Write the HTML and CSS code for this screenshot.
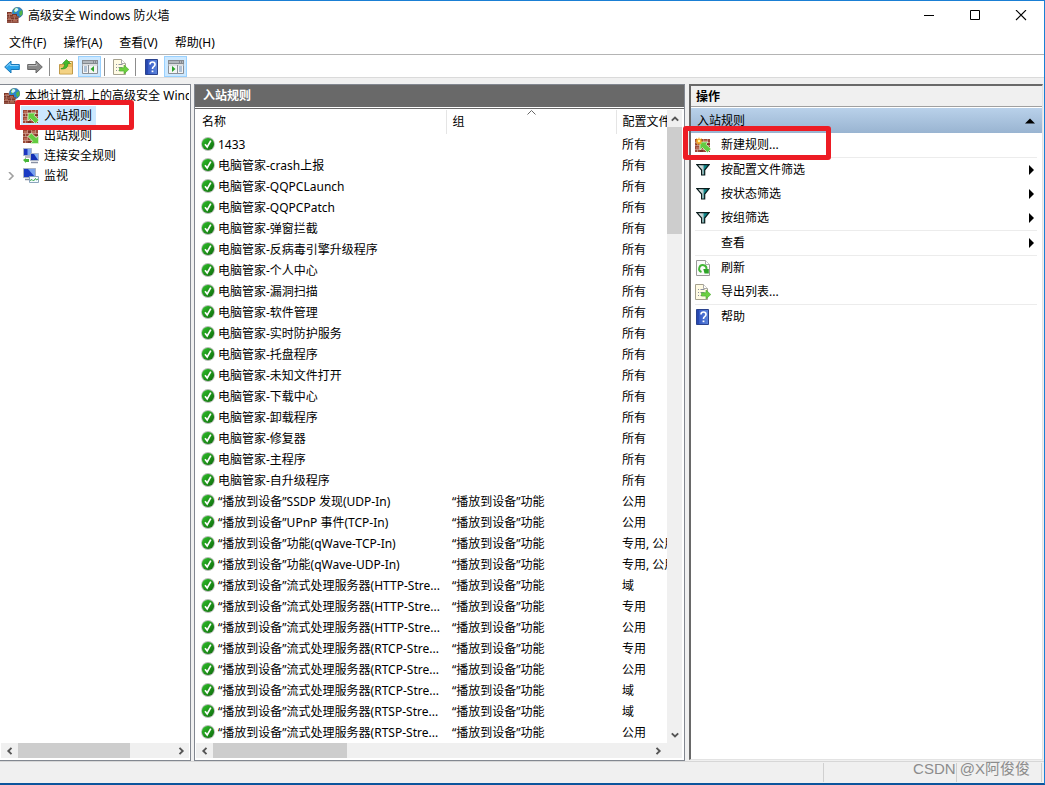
FILE: index.html
```html
<!DOCTYPE html>
<html lang="zh-CN">
<head>
<meta charset="utf-8">
<title>高级安全 Windows 防火墙</title>
<link rel="stylesheet" href="styles.css">
</head>
<body>
<svg class="sprite" aria-hidden="true">
  <defs>
    <linearGradient id="gGreen" x1="0" y1="0" x2="1" y2="1"><stop offset="0" stop-color="#2fc02a"/><stop offset="1" stop-color="#0e6a0c"/></linearGradient>
    <linearGradient id="gBlue" x1="0" y1="0" x2="1" y2="0"><stop offset="0" stop-color="#2c4fc0"/><stop offset="1" stop-color="#5d86dc"/></linearGradient>
    <linearGradient id="gTeal" x1="0" y1="0" x2="1" y2="0"><stop offset="0" stop-color="#ffffff"/><stop offset=".5" stop-color="#b8cccc"/><stop offset=".6" stop-color="#108a8c"/><stop offset="1" stop-color="#007c80"/></linearGradient>
    <symbol id="ok" viewBox="0 0 14 14">
      <circle cx="7" cy="7" r="6.900" fill="#b4bdb4"/><circle cx="7" cy="7" r="6.100" fill="url(#gGreen)"/>
      <path d="M4 7.200L6.200 10 9.800 3.600" fill="none" stroke="#fff" stroke-width="1.700"/>
    </symbol>
    <symbol id="bricks" viewBox="0 0 16 16">
      <path d="M0 2h15v13H0z" fill="#9c4a38"/>
      <path d="M1 3h3v2H1zM9 3h3v2H9zM5 6.500h3v2H5zM1 10h3v2H1zM9 10h3v2H9z" fill="#b86a55"/>
      <path d="M5 3h3v2H5zM1 6.500h1.500v2H1zM12 6.500h3v2h-3zM5 13h3v2H5z" fill="#7a3528"/>
      <path d="M0 5.500h15M0 8.500h15M0 12.500h15M4.500 2v3.500M8.500 2v3.500M12.500 2v3.500M2.500 5.500v3M6.500 5.500v3M4.500 8.500v4M8.500 8.500v4M2.500 12.500V15" stroke="#dcb4a6" stroke-width=".6"/>
    </symbol>
    <symbol id="firewall" viewBox="0 0 16 16">
      <circle cx="10.500" cy="5.500" r="5.300" fill="#2b86c9" stroke="#24547c" stroke-width=".5"/>
      <path d="M7 2q3-2 4-1l-1 3-3 2zM12 5l3-2q1 3 0 5l-2 1z" fill="#52b548"/><path d="M8.500 1.200q2.500-.6 3 1.800l-2.500 2-2-1z" fill="#d4f2f8"/>
      <path d="M0 5h5v2h5v2h1.500v7H0z" fill="#7c372a"/>
      <path d="M1 6h3v1.500H1zM6 8h3v1.500H6zM1 11h3v1.500H1zM6 13h4v1.500H6z" fill="#b26650"/>
      <path d="M0 7.500h5M0 10h11M0 12.500h11M0 15h11M4.500 5v3M2.500 7.500v3M7.500 10v3M4.500 12.500v3" stroke="#c9988a" stroke-width=".5"/>
    </symbol>
    <symbol id="inbound" viewBox="0 0 16 16"><use href="#bricks"/><path d="M5 5h8l-2 2.200 5 4.800-3.500 3.500-5-4.900L5 13z" fill="#62cc40" stroke="#dcf5d0" stroke-width=".8"/></symbol>
    <symbol id="outbound" viewBox="0 0 16 16"><use href="#bricks"/><path d="M15.500 15.500h-8l2.200-2.200L5 8.600 8.300 5l4.900 4.800 2.300-2.100z" fill="#62cc40" stroke="#dcf5d0" stroke-width=".8"/></symbol>
    <symbol id="newrule" viewBox="0 0 16 16"><use href="#inbound"/><path d="M4 0l.8 2.300L7 1l-1 2.300L8.500 4 6 5l1 2.200-2.300-1L4 8.500l-.8-2.300L1 7.200 2 5 0 4l2-.8L1 1l2.200 1.200z" fill="#f6a81c"/><circle cx="4" cy="4" r="1.300" fill="#fff2a0"/></symbol>
    <symbol id="link" viewBox="0 0 16 16">
      <path d="M.5.500h8v7h-8z" fill="#1d36c0" stroke="#aab4c8"/><path d="M4.500 1v6L8 7V1z" fill="#7fa8f0"/><path d="M2 9h6" stroke="#778"/>
      <path d="M7.500 5.500h8v7h-8z" fill="#1430b4" stroke="#aab4c8"/><path d="M11 6h4v6z" fill="#86b0f4"/><path d="M8 14.500h7" stroke="#8890a4" stroke-width="1.500"/>
      <path d="M0 12l3-2v1h3v3H3v1z" fill="#48b638"/>
    </symbol>
    <symbol id="monitor" viewBox="0 0 16 16">
      <path d="M.5.500h12v9h-12z" fill="#1c3cc4" stroke="#a9b2c2"/><path d="M5 1h7v8z" fill="#78a2ee"/><path d="M2 11.500h8" stroke="#8890a0" stroke-width="1.500"/>
      <path d="M6.500 8.500h9v6h-9z" fill="#f4fbff" stroke="#8ba4bc"/><path d="M7 12.500l2-1 1.500 1.500 2-2.500 1 1.500 1.500-1" fill="none" stroke="#35a447"/>
    </symbol>
    <symbol id="back" viewBox="0 0 16 14"><path d="M.7 7L7 1v3.500h8.300v5H7V13z" fill="#2ba3ea" stroke="#1b78b8"/><path d="M2.500 6.800L6 3.500v2h8.500" fill="none" stroke="#8ed4fa"/></symbol>
    <symbol id="forward" viewBox="0 0 16 14"><path d="M15.300 7L9 1v3.500H.7v5H9V13z" fill="#8a8a8a" stroke="#666"/><path d="M1.500 5.500h8.300V3.600" fill="none" stroke="#bbb"/></symbol>
    <symbol id="folder" viewBox="0 0 16 16"><path d="M1.500 15V5.500H7l1-3h6.500V15z" fill="#e9bd5c" stroke="#c09a48"/><path d="M9 3.500h4.500" stroke="#fff5cf"/><path d="M2 8h12v6.500H2z" fill="#f3d284"/><path d="M3 9.500q4-.500 3.500-5H4.500L8.500.500l4 4h-2.500q0 6-7 5.500z" fill="#43ba2b" stroke="#258a18" stroke-width=".6"/></symbol>
    <symbol id="export" viewBox="0 0 16 16"><path d="M.5.500h8l4 4v11H.5z" fill="#fffbe3" stroke="#a5a18e"/><path d="M8.500.500v4h4" fill="#fff" stroke="#aaa"/><path d="M3 5.500h1M5.500 5.500h4M3 8.500h1M5.500 8.500h4M3 11.500h1M5.500 11.500h4" stroke="#8a8fa0"/><path d="M6.500 8.800h4.500V6l4.800 4.500-4.800 4.400v-2.800H6.500z" fill="#6cd040" stroke="#4aa82e" stroke-width=".6"/></symbol>
    <symbol id="help" viewBox="0 0 14 16"><path d="M.5.500h12v15H.5z" fill="url(#gBlue)" stroke="#2b438e"/><path d="M2 1v14" stroke="#1f3c9e"/><path d="M5 5.500Q5 3 7.500 3T10 5.500q0 1.300-1.300 2.100T7.500 10" fill="none" stroke="#fff" stroke-width="1.600"/><path d="M6.600 11.500h1.800v1.700H6.600z" fill="#fff"/></symbol>
    <symbol id="paneLeft" viewBox="0 0 16 14"><path d="M.5.500h15v13H.5z" fill="#f4f4f4" stroke="#8a8f96"/><path d="M0 0h16v4H0z" fill="#858a90"/><path d="M1 2h10M12 2h1M14 2h1" stroke="#dfe3e8"/><path d="M0 5h16" stroke="#c4c8cc"/><path d="M6.500 5v8.500" stroke="#8a8f96"/><path d="M2 7h3M2 9h3M2 11h3" stroke="#6b8fb8"/><path d="M12 6v6L8.500 9z" fill="#2ca32a"/></symbol>
    <symbol id="paneRight" viewBox="0 0 16 14"><path d="M.5.500h15v13H.5z" fill="#f4f4f4" stroke="#8a8f96"/><path d="M0 0h16v4H0z" fill="#858a90"/><path d="M1 2h10M12 2h1M14 2h1" stroke="#dfe3e8"/><path d="M0 5h16" stroke="#c4c8cc"/><path d="M9.500 5v8.500" stroke="#8a8f96"/><path d="M11 7h3M11 9h3M11 11h3" stroke="#6b8fb8"/><path d="M4 6v6l3.500-3z" fill="#2ca32a"/></symbol>
    <symbol id="funnel" viewBox="0 0 14 12"><path d="M.9.700h12.200L8.700 6v5H5.600V6z" fill="url(#gTeal)" stroke="#0a1c1c" stroke-width="1.200"/></symbol>
    <symbol id="refresh" viewBox="0 0 14 16"><path d="M.5.500h9l4 4v11H.5z" fill="#fbfbfb" stroke="#999"/><path d="M9.500.500v4h4" fill="#fff" stroke="#aaa"/><path d="M5.500 12A3.600 3.600 0 1 1 10.300 9.500" fill="none" stroke="#43b636" stroke-width="2"/><path d="M7.300 9h5.500v4.500H8.500z" fill="#2fa52a"/></symbol>
    <symbol id="chevL" viewBox="0 0 8 8"><path d="M5.500.800L2.300 4l3.200 3.200" fill="none" stroke="#555" stroke-width="1.900"/></symbol>
    <symbol id="chevR" viewBox="0 0 8 8"><path d="M2.500.800L5.700 4 2.500 7.200" fill="none" stroke="#555" stroke-width="1.900"/></symbol>
    <symbol id="chevU" viewBox="0 0 8 8"><path d="M.8 5.700L4 2.500l3.200 3.200" fill="none" stroke="#555" stroke-width="1.900"/></symbol>
    <symbol id="chevD" viewBox="0 0 8 8"><path d="M.8 2.300L4 5.500l3.200-3.200" fill="none" stroke="#555" stroke-width="1.900"/></symbol>
  </defs>
</svg>
<div class="window">
  <header class="titlebar">
    <svg class="i16"><use href="#firewall"/></svg>
    <h1 class="caption">高级安全 Windows 防火墙</h1>
    <div class="controls">
      <button class="control" aria-label="最小化"><svg class="i12" viewBox="0 0 12 12"><path d="M1 5.500h10" stroke="#000"/></svg></button>
      <button class="control" aria-label="最大化"><svg class="i12" viewBox="0 0 12 12"><path d="M1.500.500h9v9h-9z" fill="none" stroke="#000"/></svg></button>
      <button class="control" aria-label="关闭"><svg class="i12" viewBox="0 0 12 12"><path d="M1 0l10 10M11 0L1 10" stroke="#000" stroke-width="1.100"/></svg></button>
    </div>
  </header>
  <nav class="menubar">
    <button class="menu">文件(F)</button><button class="menu">操作(A)</button><button class="menu">查看(V)</button><button class="menu">帮助(H)</button>
  </nav>
  <div class="toolbar">
    <button class="tool" aria-label="后退"><svg class="i16"><use href="#back"/></svg></button>
    <button class="tool" aria-label="前进"><svg class="i16"><use href="#forward"/></svg></button>
    <span class="divider"></span>
    <button class="tool" aria-label="向上"><svg class="i16"><use href="#folder"/></svg></button>
    <button class="tool pressed" aria-label="显示控制台树"><svg class="i16"><use href="#paneLeft"/></svg></button>
    <span class="divider"></span>
    <button class="tool" aria-label="导出列表"><svg class="i16"><use href="#export"/></svg></button>
    <span class="divider"></span>
    <button class="tool" aria-label="帮助"><svg class="i16"><use href="#help"/></svg></button>
    <button class="tool pressed" aria-label="显示操作窗格"><svg class="i16"><use href="#paneRight"/></svg></button>
  </div>
  <main class="panes">
    <section class="pane tree-pane">
      <ul class="tree">
        <li class="node root"><svg class="i16"><use href="#firewall"/></svg><span class="label">本地计算机 上的高级安全 Windows 防火墙</span></li>
        <li class="node"><span class="twist"></span><span class="selected"><svg class="i16"><use href="#inbound"/></svg><span class="label">入站规则</span></span><span class="mark mark-tree"></span></li>
        <li class="node"><span class="twist"></span><svg class="i16"><use href="#outbound"/></svg><span class="label">出站规则</span></li>
        <li class="node"><span class="twist"></span><svg class="i16"><use href="#link"/></svg><span class="label">连接安全规则</span></li>
        <li class="node"><span class="twist"><svg class="i8" viewBox="0 0 8 8"><path d="M2 0l4 4-4 4" fill="none" stroke="#a0a0a0" stroke-width="1.600"/></svg></span><svg class="i16"><use href="#monitor"/></svg><span class="label">监视</span></li>
      </ul>
      <div class="hscroll"><button class="arrow" aria-label="向左"><svg class="i8"><use href="#chevL"/></svg></button><div class="track"><div class="thumb thumb-tree"></div></div><button class="arrow" aria-label="向右"><svg class="i8"><use href="#chevR"/></svg></button></div>
    </section>
    <section class="pane list-pane">
      <h2 class="list-title">入站规则</h2>
      <div class="list-body">
        <div class="list-view">
          <table class="rules">
            <colgroup><col class="col-name"><col class="col-group"><col></colgroup>
            <thead><tr><th>名称</th><th>组<svg class="sort" viewBox="0 0 9 5"><path d="M.5 4.500l4-4 4 4" fill="none" stroke="#666"/></svg></th><th>配置文件</th></tr></thead>
            <tbody>
              <tr><td><svg class="i14"><use href="#ok"/></svg>1433</td><td></td><td>所有</td></tr>
              <tr><td><svg class="i14"><use href="#ok"/></svg>电脑管家-crash上报</td><td></td><td>所有</td></tr>
              <tr><td><svg class="i14"><use href="#ok"/></svg>电脑管家-QQPCLaunch</td><td></td><td>所有</td></tr>
              <tr><td><svg class="i14"><use href="#ok"/></svg>电脑管家-QQPCPatch</td><td></td><td>所有</td></tr>
              <tr><td><svg class="i14"><use href="#ok"/></svg>电脑管家-弹窗拦截</td><td></td><td>所有</td></tr>
              <tr><td><svg class="i14"><use href="#ok"/></svg>电脑管家-反病毒引擎升级程序</td><td></td><td>所有</td></tr>
              <tr><td><svg class="i14"><use href="#ok"/></svg>电脑管家-个人中心</td><td></td><td>所有</td></tr>
              <tr><td><svg class="i14"><use href="#ok"/></svg>电脑管家-漏洞扫描</td><td></td><td>所有</td></tr>
              <tr><td><svg class="i14"><use href="#ok"/></svg>电脑管家-软件管理</td><td></td><td>所有</td></tr>
              <tr><td><svg class="i14"><use href="#ok"/></svg>电脑管家-实时防护服务</td><td></td><td>所有</td></tr>
              <tr><td><svg class="i14"><use href="#ok"/></svg>电脑管家-托盘程序</td><td></td><td>所有</td></tr>
              <tr><td><svg class="i14"><use href="#ok"/></svg>电脑管家-未知文件打开</td><td></td><td>所有</td></tr>
              <tr><td><svg class="i14"><use href="#ok"/></svg>电脑管家-下载中心</td><td></td><td>所有</td></tr>
              <tr><td><svg class="i14"><use href="#ok"/></svg>电脑管家-卸载程序</td><td></td><td>所有</td></tr>
              <tr><td><svg class="i14"><use href="#ok"/></svg>电脑管家-修复器</td><td></td><td>所有</td></tr>
              <tr><td><svg class="i14"><use href="#ok"/></svg>电脑管家-主程序</td><td></td><td>所有</td></tr>
              <tr><td><svg class="i14"><use href="#ok"/></svg>电脑管家-自升级程序</td><td></td><td>所有</td></tr>
              <tr><td><svg class="i14"><use href="#ok"/></svg>“播放到设备”SSDP 发现(UDP-In)</td><td>“播放到设备”功能</td><td>公用</td></tr>
              <tr><td><svg class="i14"><use href="#ok"/></svg>“播放到设备”UPnP 事件(TCP-In)</td><td>“播放到设备”功能</td><td>公用</td></tr>
              <tr><td><svg class="i14"><use href="#ok"/></svg>“播放到设备”功能(qWave-TCP-In)</td><td>“播放到设备”功能</td><td>专用, 公用</td></tr>
              <tr><td><svg class="i14"><use href="#ok"/></svg>“播放到设备”功能(qWave-UDP-In)</td><td>“播放到设备”功能</td><td>专用, 公用</td></tr>
              <tr><td><svg class="i14"><use href="#ok"/></svg>“播放到设备”流式处理服务器(HTTP-Stre...</td><td>“播放到设备”功能</td><td>域</td></tr>
              <tr><td><svg class="i14"><use href="#ok"/></svg>“播放到设备”流式处理服务器(HTTP-Stre...</td><td>“播放到设备”功能</td><td>专用</td></tr>
              <tr><td><svg class="i14"><use href="#ok"/></svg>“播放到设备”流式处理服务器(HTTP-Stre...</td><td>“播放到设备”功能</td><td>公用</td></tr>
              <tr><td><svg class="i14"><use href="#ok"/></svg>“播放到设备”流式处理服务器(RTCP-Stre...</td><td>“播放到设备”功能</td><td>专用</td></tr>
              <tr><td><svg class="i14"><use href="#ok"/></svg>“播放到设备”流式处理服务器(RTCP-Stre...</td><td>“播放到设备”功能</td><td>公用</td></tr>
              <tr><td><svg class="i14"><use href="#ok"/></svg>“播放到设备”流式处理服务器(RTCP-Stre...</td><td>“播放到设备”功能</td><td>域</td></tr>
              <tr><td><svg class="i14"><use href="#ok"/></svg>“播放到设备”流式处理服务器(RTSP-Stre...</td><td>“播放到设备”功能</td><td>域</td></tr>
              <tr><td><svg class="i14"><use href="#ok"/></svg>“播放到设备”流式处理服务器(RTSP-Stre...</td><td>“播放到设备”功能</td><td>公用</td></tr>
            </tbody>
          </table>
        </div>
        <div class="vscroll"><button class="arrow" aria-label="向上"><svg class="i8"><use href="#chevU"/></svg></button><div class="track"><div class="thumb thumb-rows"></div></div><button class="arrow" aria-label="向下"><svg class="i8"><use href="#chevD"/></svg></button></div>
      </div>
      <div class="hscroll list-hscroll"><button class="arrow" aria-label="向左"><svg class="i8"><use href="#chevL"/></svg></button><div class="track"><div class="thumb thumb-list"></div></div><button class="arrow" aria-label="向右"><svg class="i8"><use href="#chevR"/></svg></button></div>
    </section>
    <aside class="actions-pane">
      <h2 class="actions-title">操作</h2>
      <button class="group-head">入站规则<svg class="i10" viewBox="0 0 10 10"><path d="M0 7.500h10l-5-5z" fill="#000"/></svg></button>
      <div class="actions">
        <div class="action-set">
          <button class="action"><span class="icon"><svg class="i16"><use href="#newrule"/></svg></span>新建规则...</button>
          <span class="mark mark-action"></span>
        </div>
        <div class="action-set">
          <button class="action"><span class="icon"><svg class="i14 filter"><use href="#funnel"/></svg></span>按配置文件筛选<svg class="more" viewBox="0 0 5 10"><path d="M0 0v10l5-5z"/></svg></button>
          <button class="action"><span class="icon"><svg class="i14 filter"><use href="#funnel"/></svg></span>按状态筛选<svg class="more" viewBox="0 0 5 10"><path d="M0 0v10l5-5z"/></svg></button>
          <button class="action"><span class="icon"><svg class="i14 filter"><use href="#funnel"/></svg></span>按组筛选<svg class="more" viewBox="0 0 5 10"><path d="M0 0v10l5-5z"/></svg></button>
        </div>
        <div class="action-set">
          <button class="action"><span class="icon"></span>查看<svg class="more" viewBox="0 0 5 10"><path d="M0 0v10l5-5z"/></svg></button>
        </div>
        <div class="action-set">
          <button class="action"><span class="icon"><svg class="i16"><use href="#refresh"/></svg></span>刷新</button>
          <button class="action"><span class="icon"><svg class="i16"><use href="#export"/></svg></span>导出列表...</button>
        </div>
        <div class="action-set">
          <button class="action"><span class="icon"><svg class="i16"><use href="#help"/></svg></span>帮助</button>
        </div>
      </div>
    </aside>
  </main>
  <footer class="statusbar">
    <span class="cell cell-main"></span><span class="cell cell-mid"></span><span class="cell cell-end"></span>
    <span class="watermark">CSDN @X阿俊俊</span>
  </footer>
</div>
</body>
</html>
```

FILE: styles.css
```css
* { box-sizing: border-box; }
body {
  margin: 0;
  background: #f0f0f0;
  color: #000;
  font: 12px/20px "Noto Sans", "Noto Sans CJK SC", sans-serif;
}
button {
  margin: 0;
  padding: 0;
  border: 0;
  background: none;
  color: inherit;
  font: inherit;
}
h1, h2 { margin: 0; font-size: 12px; }
svg { display: block; flex: none; }
.sprite { position: absolute; width: 0; height: 0; }
.i16 { width: 16px; height: 16px; }
.i14 { width: 14px; height: 14px; }
.i12 { width: 12px; height: 12px; }
.i10 { width: 10px; height: 10px; }
.i8 { width: 8px; height: 8px; }

.window {
  display: flex;
  flex-direction: column;
  min-height: 100vh;
  border-top: 1px solid #1a7fd4;
  border-right: 1px solid #1a7fd4;
  border-bottom: 2px solid #0b559c;
}
.titlebar {
  display: flex;
  align-items: center;
  height: 30px;
  padding-left: 7px;
  gap: 5px;
  background: #fff;
}
.titlebar .i16 { margin-bottom: 2px; }
.caption { flex: 1; font-weight: 400; }
.controls { display: flex; }
.control { display: grid; place-items: center; width: 46px; height: 30px; }
.menubar {
  display: flex;
  height: 24px;
  padding-left: 9px;
  gap: 17px;
  background: #fff;
  border-bottom: 1px solid #b4b4b4;
}
.toolbar {
  display: flex;
  align-items: center;
  height: 23px;
  padding-top: 1px;
  background: #fff;
  border-bottom: 1px solid #dadada;
}
.tool { display: grid; place-items: center; width: 23px; height: 21px; }
.pressed { border: 1px solid #99d1ff; background: #cce8ff; }
.pressed .i16 { height: 14px; }
.tool + .pressed { margin-left: 1px; }
.divider { width: 1px; height: 18px; margin: 0 4px 0 3px; background: #8c8c8c; }

.panes {
  flex: 1;
  display: grid;
  grid-template-columns: 191px minmax(0, 491fr) minmax(0, 356fr);
  column-gap: 3px;
  padding-top: 6px;
}
.pane {
  display: flex;
  flex-direction: column;
  min-width: 0;
  padding: 1px;
  border: 1px solid #828790;
  background: #fff;
}
.tree-pane { border-left: 0; }
.tree { flex: 1; margin: 0; padding: 0; list-style: none; }
.node { position: relative; display: flex; align-items: center; height: 20px; }
.node .label { padding-left: 5px; white-space: nowrap; }
.root { padding-left: 3px; overflow: hidden; }
.twist { display: grid; place-items: center; width: 20px; padding-right: 1px; }
.twist + .i16 { margin-left: 2px; }
.selected { display: flex; align-items: center; padding: 0 4px 0 2px; background: #cce8ff; }
.mark { position: absolute; z-index: 2; border: 5px solid #ed1c24; border-radius: 3px; }
.mark-tree { left: 14px; top: -6px; width: 119px; height: 30px; }
.mark-action { left: -12px; top: -7px; width: 148px; height: 34px; }

.hscroll { display: flex; height: 15px; margin-bottom: 1px; background: #f0f0f0; }
.vscroll { display: flex; flex-direction: column; width: 15px; margin-right: 2px; background: #f0f0f0; }
.track { flex: 1; }
.arrow { display: grid; place-items: center; }
.hscroll .arrow { width: 17px; }
.vscroll .arrow { height: 17px; }
.thumb { background: #cdcdcd; }
.thumb-tree { width: 112px; height: 15px; }
.thumb-list { width: 134px; height: 15px; }
.thumb-rows { height: 107px; }

.list-pane { padding: 0; }
.list-title {
  height: 22px;
  padding-left: 8px;
  background: #696969;
  color: #fff;
  line-height: 22px;
}
.list-body { flex: 1; display: flex; margin-top: 1px; padding-top: 1px; border-top: 1px solid #696969; }
.list-view { flex: 1; min-width: 0; overflow: hidden; }
.list-hscroll { margin: 0 2px 2px 1px; padding-right: 16px; }
.rules { width: 100%; table-layout: fixed; border-collapse: collapse; }
.col-name { width: 251px; }
.col-group { width: 170px; }
.rules th, .rules td {
  padding: 0 0 0 6px;
  overflow: hidden;
  text-align: left;
  font-weight: 400;
  white-space: nowrap;
}
.rules th { position: relative; height: 24px; padding-left: 7px; border-right: 1px solid #e5e5e5; }
.rules th:last-child { border-right: 0; }
.rules td { height: 21px; line-height: 21px; }
.rules td + td, .rules th + th { padding-left: 6px; }
.rules .i14 { float: left; margin: 3px 3px 0 0; }
.sort { position: absolute; left: calc(50% - 4px); top: 0; width: 9px; height: 5px; }

.actions-pane {
  margin: 0 1px 1px;
  border-top: 2px solid #696969;
  border-left: 2px solid #696969;
  border-right: 1px solid #e3e3e3;
  border-bottom: 1px solid #e3e3e3;
  background: #fff;
}
.actions-title { height: 21px; padding-left: 5px; background: #f0f0f0; border-bottom: 1px solid #a0a0a0; line-height: 22px; }
.group-head {
  display: flex;
  align-items: center;
  justify-content: space-between;
  width: 100%;
  height: 25px;
  margin-top: 1px;
  padding: 0 7px 0 6px;
  background: linear-gradient(#b9d1ea, #99b4d1);
}
.actions { padding: 0 5px 0 4px; }
.action-set { position: relative; border-bottom: 1px solid #ececec; }
.action-set:last-child { border-bottom: 0; }
.action { display: flex; align-items: center; width: 100%; height: 24px; padding: 0 3px 0 0; text-align: left; }
.icon { display: grid; place-items: center; width: 16px; margin-right: 10px; }
.filter { height: 12px; }
.more { width: 5px; height: 10px; margin-left: auto; }

.statusbar {
  position: relative;
  display: flex;
  height: 22px;
  padding: 1px 2px 1px 0;
  border-top: 1px solid #d7d7d7;
}
.cell { border-right: 1px solid #d0d0d0; }
.cell-main { flex: 1; }
.cell-mid { width: 133px; }
.cell-end { width: 85px; }
.watermark {
  position: absolute;
  right: 14px;
  top: -5px;
  color: #8c8c8c;
  font: 15px/24px "Liberation Sans", "Noto Sans CJK SC", sans-serif;
}
```
